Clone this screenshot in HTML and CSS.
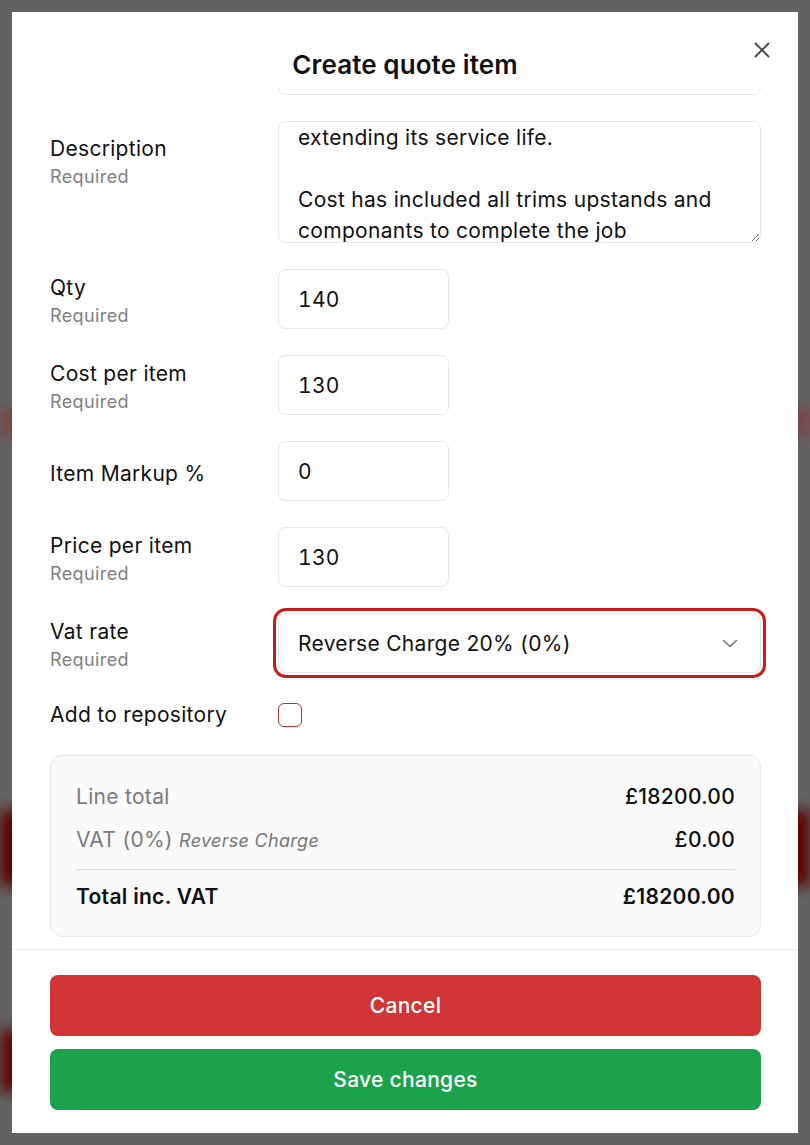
FILE: index.html
```html
<!DOCTYPE html>
<html lang="en">
<head>
<meta charset="utf-8">
<title>Create quote item</title>
<link rel="stylesheet" href="styles.css">
</head>
<body>
<div class="backdrop">
  <div class="glow glow-a"></div>
  <div class="glow glow-b"></div>
  <div class="glow glow-c"></div>
</div>

<div class="modal" role="dialog" aria-labelledby="modal-title">
  <header class="modal-header">
    <h1 class="modal-title" id="modal-title">Create quote item</h1>
    <button class="close" type="button" aria-label="Close">
      <svg width="16" height="16" viewBox="0 0 16 16" fill="none" stroke="#444" stroke-width="1.8" stroke-linecap="round">
        <path d="M1.5 1.5 L14.5 14.5 M14.5 1.5 L1.5 14.5"/>
      </svg>
    </button>
  </header>

  <div class="modal-body">
    <form class="form">
      <div class="label-cell"></div>
      <div class="control-cell"><input class="field field-wide" type="text" value="" aria-label="Name"></div>

      <div class="label-cell label-top"><span class="label">Description</span><span class="hint">Required</span></div>
      <div class="control-cell"><textarea class="field textarea">extending its service life.

Cost has included all trims upstands and componants to complete the job</textarea></div>

      <div class="label-cell"><span class="label">Qty</span><span class="hint">Required</span></div>
      <div class="control-cell"><input class="field field-short" type="text" value="140"></div>

      <div class="label-cell"><span class="label">Cost per item</span><span class="hint">Required</span></div>
      <div class="control-cell"><input class="field field-short" type="text" value="130"></div>

      <div class="label-cell"><span class="label">Item Markup %</span></div>
      <div class="control-cell"><input class="field field-short" type="text" value="0"></div>

      <div class="label-cell"><span class="label">Price per item</span><span class="hint">Required</span></div>
      <div class="control-cell"><input class="field field-short" type="text" value="130"></div>

      <div class="label-cell"><span class="label">Vat rate</span><span class="hint">Required</span></div>
      <div class="control-cell">
        <div class="field select" tabindex="0">
          <span>Reverse Charge 20% (0%)</span>
          <svg width="16" height="9" viewBox="0 0 16 9" fill="none" stroke="#777" stroke-width="1.6" stroke-linecap="round" stroke-linejoin="round">
            <path d="M1.5 1.5 L8 7.5 L14.5 1.5"/>
          </svg>
        </div>
      </div>

      <div class="label-cell label-single"><span class="label">Add to repository</span></div>
      <div class="control-cell"><input class="checkbox" type="checkbox" aria-label="Add to repository"></div>
    </form>

    <section class="summary">
      <div class="summary-row">
        <span class="muted">Line total</span>
        <span class="amount">£18200.00</span>
      </div>
      <div class="summary-row">
        <span class="muted">VAT (0%) <em class="note">Reverse Charge</em></span>
        <span class="amount">£0.00</span>
      </div>
      <div class="summary-row summary-total">
        <span>Total inc. VAT</span>
        <span class="amount">£18200.00</span>
      </div>
    </section>
  </div>

  <footer class="modal-footer">
    <button class="btn btn-cancel" type="button">Cancel</button>
    <button class="btn btn-save" type="button">Save changes</button>
  </footer>
</div>
</body>
</html>
```
FILE: styles.css
```css
* {
  box-sizing: border-box;
}

html,
body {
  margin: 0;
  height: 100%;
}

body {
  font-family: Inter, "Noto Sans", "Liberation Sans", sans-serif;
  color: #111;
  background: #626262;
  overflow: hidden;
}

/* dimmed page behind the dialog */
.backdrop {
  position: fixed;
  inset: 0;
  background: #626262;
  overflow: hidden;
}

.glow {
  position: absolute;
  filter: blur(7px);
}

.glow-a {
  left: 0;
  right: 0;
  top: 408px;
  height: 28px;
  background: #7a4646;
}

.glow-b {
  left: 0;
  right: 0;
  top: 810px;
  height: 76px;
  background: #5c0202;
}

.glow-c {
  left: 0;
  width: 400px;
  top: 1030px;
  height: 62px;
  background: #5e0606;
}

/* dialog */
.modal {
  position: fixed;
  top: 12px;
  left: 12px;
  width: 786px;
  height: 1121px;
  background: #fff;
  display: flex;
  flex-direction: column;
}

.modal-header {
  position: relative;
  flex: none;
  height: 76px;
  padding-top: 37px;
  text-align: center;
}

.modal-title {
  margin: 0;
  font-size: 26px;
  line-height: 32px;
  font-weight: 600;
  letter-spacing: 0.1px;
}

.close {
  position: absolute;
  top: 30px;
  left: 742px;
  width: 16px;
  height: 16px;
  padding: 0;
  border: 0;
  background: none;
  display: flex;
}

.modal-body {
  flex: 1;
  overflow: hidden;
  padding: 0 37px 0 38px;
}

/* form grid: label column + control column */
.form {
  margin-top: -53px;
  display: grid;
  grid-template-columns: 228px 1fr;
  row-gap: 26px;
}

.label-cell {
  display: flex;
  flex-direction: column;
  align-self: center;
  margin: 3px 0 -3px;
}

.label-top {
  align-self: start;
  margin: 0;
  padding-top: 14px;
}

.label {
  font-size: 21px;
  line-height: 28px;
  letter-spacing: 0.3px;
  color: #111;
}

.label-single {
  margin: 0;
}

.label-single .label {
  line-height: 32px;
}

.hint {
  font-size: 18px;
  line-height: 28px;
  letter-spacing: 0.4px;
  color: #808080;
}

.control-cell {
  display: flex;
  align-items: center;
}

.field {
  height: 60px;
  border: 1px solid #e6e6e6;
  border-radius: 8px;
  padding: 0 19px;
  font-family: inherit;
  font-size: 21px;
  letter-spacing: 0.3px;
  color: #111;
  background: #fff;
  outline: none;
}

.field-wide {
  width: 100%;
}

.field-short {
  width: 171px;
  font-variant-numeric: tabular-nums;
}

.textarea {
  width: 100%;
  height: 122px;
  padding: 0 19px;
  line-height: 31px;
  resize: vertical;
  overflow: hidden;
  display: block;
}

.select {
  width: 100%;
  display: flex;
  align-items: center;
  justify-content: space-between;
  padding: 0 22px 0 19px;
  box-shadow: 0 0 0 2px #fff, 0 0 0 5px #c41f1f;
}

.checkbox {
  appearance: none;
  -webkit-appearance: none;
  margin: 0;
  width: 24px;
  height: 24px;
  border: 1.5px solid #b83030;
  border-radius: 6px;
  background: #fff;
}

/* totals card */
.summary {
  margin-top: 24px;
  background: #fafafa;
  border: 1px solid #e7e7e7;
  border-radius: 12px;
  padding: 27px 25px 25px;
  display: flex;
  flex-direction: column;
  gap: 15px;
}

.summary-row {
  display: flex;
  justify-content: space-between;
  align-items: baseline;
  font-size: 21px;
  line-height: 28px;
  letter-spacing: 0.3px;
}

.muted {
  color: #7a7a7a;
}

.note {
  font-size: 18px;
  color: #777;
}

.amount {
  font-weight: 500;
  color: #111;
}

.summary-total {
  margin-top: -1px;
  padding-top: 13px;
  border-top: 1px solid #dedede;
  font-weight: 600;
}

.summary-total .amount {
  font-weight: 600;
}

/* footer actions */
.modal-footer {
  flex: none;
  height: 184px;
  border-top: 1px solid #ececec;
  padding: 25px 37px 0 38px;
  display: flex;
  flex-direction: column;
  gap: 13px;
}

.btn {
  height: 61px;
  border: 0;
  border-radius: 8px;
  font-family: inherit;
  font-size: 21px;
  font-weight: 500;
  letter-spacing: 0.3px;
  color: #fff;
}

.btn-cancel {
  background: #d13535;
}

.btn-save {
  background: #1ba34c;
}
```
